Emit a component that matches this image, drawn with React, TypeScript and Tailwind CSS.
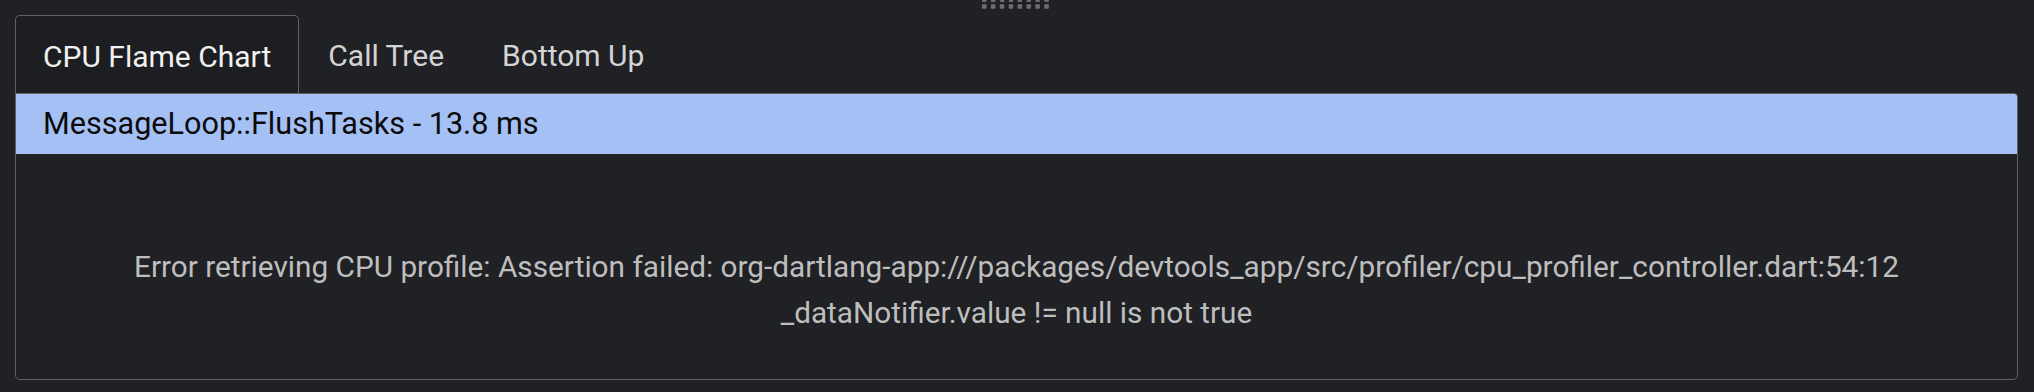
import React from "react";

const tabs = ["CPU Flame Chart", "Call Tree", "Bottom Up"];

function DragHandle() {
  const cols = [0, 1, 2, 3, 4, 5, 6, 7];
  return (
    <svg width="72" height="10" viewBox="0 0 72 10" className="block">
      {cols.map((c) => (
        <g key={c} fill="#6e6e70">
          <rect x={c * 8.9} y={-2} width="4.5" height="4" rx="0.8" />
          <rect x={c * 8.9} y={4.3} width="4.5" height="4.5" rx="0.8" />
        </g>
      ))}
    </svg>
  );
}

export default function App() {
  return (
    <div
      className="h-[392px] w-full overflow-hidden bg-[#202124]"
      style={{ fontFamily: "Roboto, 'Liberation Sans', sans-serif" }}
    >
      <div className="flex h-[15px] justify-center pl-[1px]">
        <DragHandle />
      </div>

      <div className="ml-[15px] mr-[16px]">
        <div className="flex h-[78px] items-stretch">
          {tabs.map((t, i) => (
            <div
              key={t}
              className={
                i === 0
                  ? "flex items-center rounded-t-[5px] border border-b-0 border-[#5f6164] bg-[#1d1e21] px-[27px] pt-[3px] text-[30px] text-[#f1f1f1]"
                  : "flex items-center px-[29px] pt-[3px] text-[30px] text-[#d4d4d4]"
              }
            >
              {t}
            </div>
          ))}
        </div>

        <div className="flex h-[287px] flex-col overflow-hidden rounded-b-[5px] rounded-tr-[4px] border border-[#5f6164]">
          <div className="flex h-[60px] shrink-0 items-center bg-[#a5c0f4] pl-[27px] text-[30.6px] text-[#0b0b0c]">
            MessageLoop::FlushTasks - 13.8 ms
          </div>
          <div className="pt-[90px] text-center text-[29.75px] leading-[46px] text-[#bebebe]">
            Error retrieving CPU profile: Assertion failed:
            org-dartlang-app:///packages/devtools_app/src/profiler/cpu_profiler_controller.dart:54:12
            <br />
            _dataNotifier.value != null is not true
          </div>
        </div>
      </div>
    </div>
  );
}
